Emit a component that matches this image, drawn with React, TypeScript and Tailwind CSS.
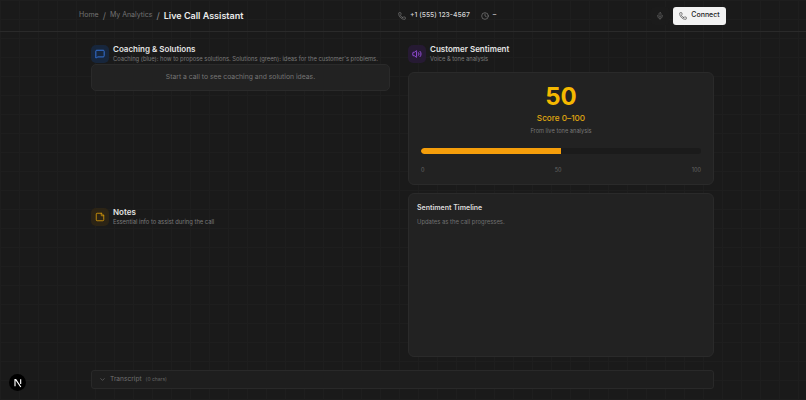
import React from 'react';
import { ChevronDown, Clock, MessageSquare, Mic, Phone, StickyNote, Volume2 } from 'lucide-react';

const font = { fontFamily: 'Inter, "Liberation Sans", sans-serif' };

function SectionHead({ icon, tint, title, sub }: { icon: React.ReactNode; tint: string; title: string; sub: string }) {
    return (
        <div className="flex items-center gap-[4px]">
            <div className={`w-[18px] h-[18px] rounded-[5px] flex items-center justify-center shrink-0 ${tint}`}>
                {icon}
            </div>
            <div>
                <h2 className="text-[8px] leading-[10px] font-semibold text-[#e4e4e4]">{title}</h2>
                <p className="text-[5.8px] leading-[9px] text-[#7a7a7a] whitespace-nowrap">{sub}</p>
            </div>
        </div>
    );
}

export default function App() {
    return (
        <div
            style={font}
            className="relative w-[806px] h-[400px] overflow-hidden bg-[#1a1a1a] bg-[linear-gradient(#1e1e1e_1px,transparent_1px),linear-gradient(90deg,#1e1e1e_1px,transparent_1px)] bg-[size:19px_19px]"
        >
            {/* Header */}
            <header className="h-[32px] border-b border-[#2a2a2a] pl-[79px] pr-[80px] flex items-center">
                <nav className="flex items-center w-[319px] whitespace-nowrap">
                    <span className="text-[7px] text-[#737373]">Home</span>
                    <span className="text-[9px] leading-none text-[#737373] ml-[4px] mr-[4px]">/</span>
                    <span className="text-[7px] text-[#737373]">My Analytics</span>
                    <span className="text-[9px] leading-none text-[#8a8a8a] ml-[4px] mr-[4px]">/</span>
                    <span className="text-[9px] font-semibold text-[#ececec]">Live Call Assistant</span>
                </nav>
                <div className="flex items-center text-[#8f8f8f]">
                    <Phone className="w-[8px] h-[8px]" strokeWidth={1.75} />
                    <span className="ml-[4px] text-[6.8px] font-medium text-[#d4d4d4]">+1 (555) 123-4567</span>
                    <Clock className="w-[8px] h-[8px] ml-[11px]" strokeWidth={1.75} />
                    <span className="ml-[4px] text-[7px] font-medium text-[#d4d4d4]">–</span>
                </div>
                <div className="ml-auto flex items-center gap-[4px]">
                    <div className="w-[18px] h-[18px] rounded-[4px] flex items-center justify-center bg-[#1b1b1b]">
                        <Mic className="w-[8px] h-[8px] text-[#7f7f7f]" strokeWidth={1.5} />
                    </div>
                    <button className="h-[18px] w-[53px] rounded-[3px] bg-[#f2f2f2] flex items-center justify-center gap-[4px] text-[#222]">
                        <Phone className="w-[8px] h-[8px]" strokeWidth={1.75} />
                        <span className="text-[7px] font-medium">Connect</span>
                    </button>
                </div>
            </header>

            {/* Main */}
            <main className="w-[623px] ml-[91px] pt-[12px]">
                <div className="grid grid-cols-[299px_306px] grid-rows-[141px_164px] gap-x-[18px] gap-y-[8px]">
                    <section>
                        <SectionHead
                            icon={<MessageSquare className="w-[10px] h-[10px] text-[#3b82f6]" />}
                            tint="bg-[#17263c]"
                            title="Coaching & Solutions"
                            sub="Coaching (blue): how to propose solutions. Solutions (green): ideas for the customer's problems."
                        />
                        <div className="mt-[1px] h-[27px] rounded-[5px] bg-[#222222] border border-[#2a2a2a] flex items-center justify-center text-[6.8px] text-[#757575]">
                            Start a call to see coaching and solution ideas.
                        </div>
                    </section>

                    <section>
                        <SectionHead
                            icon={<Volume2 className="w-[10px] h-[10px] text-[#a855f7]" />}
                            tint="bg-[#261a33]"
                            title="Customer Sentiment"
                            sub="Voice & tone analysis"
                        />
                        <div className="mt-[9px] h-[113px] rounded-[6px] bg-[#222222] border border-[#2a2a2a] px-[12px] pt-[10px] flex flex-col items-center">
                            <div className="text-[24px] leading-[28px] font-bold text-[#f5b800]">50</div>
                            <div className="mt-[1px] text-[8.2px] leading-[12px] font-medium text-[#e0a80f]">Score 0–100</div>
                            <div className="mt-[2px] text-[5.7px] leading-[10px] text-[#787878]">From live tone analysis</div>
                            <div className="mt-[12px] w-full h-[6px] rounded-full bg-[#1b1b1b] overflow-hidden">
                                <div className="h-full w-1/2 rounded-l-full bg-[#f59e0b]" />
                            </div>
                            <div className="mt-[12px] w-full flex justify-between text-[5.5px] leading-[8px] text-[#666666]">
                                <span>0</span>
                                <span>50</span>
                                <span>100</span>
                            </div>
                        </div>
                    </section>

                    <section className="pt-[14px]">
                        <SectionHead
                            icon={<StickyNote className="w-[10px] h-[10px] text-[#d99b0b]" />}
                            tint="bg-[#2c2415]"
                            title="Notes"
                            sub="Essential info to assist during the call"
                        />
                    </section>

                    <section className="rounded-[6px] bg-[#222222] border border-[#2a2a2a] px-[8px] pt-[9px]">
                        <h3 className="text-[7px] leading-[9px] font-semibold text-[#dcdcdc]">Sentiment Timeline</h3>
                        <p className="mt-[5px] text-[5.9px] leading-[9px] text-[#707070]">Updates as the call progresses.</p>
                    </section>
                </div>

                {/* Transcript */}
                <div className="mt-[13px] h-[19px] rounded-[3px] bg-[#1e1e1e] border border-[#292929] flex items-center px-[7px]">
                    <ChevronDown className="w-[7px] h-[7px] text-[#7a7a7a]" />
                    <span className="ml-[4px] text-[6.6px] text-[#707070]">Transcript</span>
                    <span className="ml-[4px] text-[5px] text-[#666666]">(0 chars)</span>
                </div>
            </main>

            {/* Next.js dev badge */}
            <div className="absolute left-[9px] bottom-[9px] w-[17px] h-[17px] rounded-full bg-black flex items-center justify-center">
                <svg viewBox="0 0 18 18" className="w-[12px] h-[12px]" fill="none">
                    <path d="M4.5 14V4h1.2l7.5 11" stroke="#fff" strokeWidth="1.7" />
                    <path d="M13 3.5v7" stroke="#fff" strokeWidth="1.7" />
                </svg>
            </div>
        </div>
    );
}
